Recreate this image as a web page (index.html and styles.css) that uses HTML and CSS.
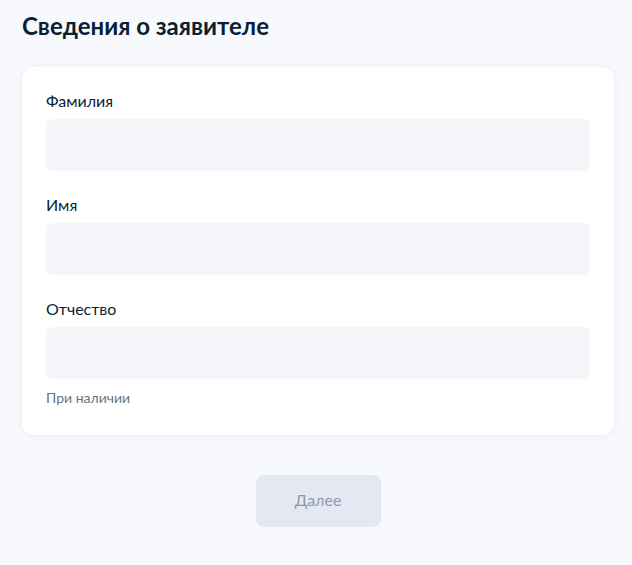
FILE: index.html
```html
<!DOCTYPE html>
<html lang="ru">
<head>
    <meta charset="UTF-8">
    <meta name="viewport" content="width=device-width, initial-scale=1.0">
    <title>Сведения о заявителе</title>
    <link rel="stylesheet" href="styles.css">
</head>
<body>
    <div class="page">
        <h1 class="title">Сведения о заявителе</h1>

        <div class="card">
            <div class="field">
                <label class="field-label" for="last-name">Фамилия</label>
                <input id="last-name" class="field-input" type="text">
            </div>
            <div class="field">
                <label class="field-label" for="first-name">Имя</label>
                <input id="first-name" class="field-input" type="text">
            </div>
            <div class="field">
                <label class="field-label" for="middle-name">Отчество</label>
                <input id="middle-name" class="field-input" type="text">
                <div class="field-hint">При наличии</div>
            </div>
        </div>

        <div class="actions">
            <button class="btn-next" disabled>Далее</button>
        </div>
    </div>
</body>
</html>
```

FILE: styles.css
```css
body {
    margin: 0;
    background: #f8f9fd;
    font-family: Lato, "Noto Sans", sans-serif;
    color: #0b1f33;
}

.page {
    padding: 10px 18px 0 22px;
}

.title {
    margin: 0 0 25px;
    font-size: 24px;
    line-height: 32px;
    font-weight: 700;
}

.card {
    background: #fff;
    border-radius: 12px;
    padding: 24px 24px 27px;
    box-shadow: 0 1px 6px rgba(180, 195, 225, 0.25);
}

.field + .field {
    margin-top: 24px;
}

.field-label {
    display: block;
    font-size: 16px;
    line-height: 20px;
    margin-bottom: 8px;
}

.field-input {
    display: block;
    box-sizing: border-box;
    width: 100%;
    height: 52px;
    border: none;
    border-radius: 6px;
    background: #f5f6f9;
    padding: 0 16px;
    font: inherit;
    outline: none;
}

.field-hint {
    margin-top: 9px;
    font-size: 14px;
    line-height: 20px;
    color: #66727f;
}

.actions {
    display: flex;
    justify-content: center;
    margin-top: 40px;
}

.btn-next {
    width: 125px;
    height: 52px;
    padding: 0 0 3px;
    border: none;
    border-radius: 8px;
    background: #e4e8f2;
    color: #8d98aa;
    font: inherit;
    font-size: 16px;
}
```
